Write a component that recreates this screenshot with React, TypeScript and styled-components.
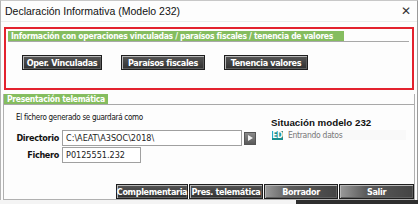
import styled, { createGlobalStyle } from "styled-components";

const GlobalStyle = createGlobalStyle`
  html, body {
    margin: 0;
    padding: 0;
    background: #ffffff;
  }
  body {
    width: 418px;
    height: 204px;
    overflow: hidden;
    font-family: "Liberation Sans", Arial, sans-serif;
  }
`;

const narrow = `"DejaVu Sans Condensed", "Liberation Sans", sans-serif`;

const Window = styled.div`
  width: 416px;
  height: 199px;
  border-left: 1px solid #b4b4b4;
  border-top: 1px solid #c8c8c8;
  border-right: 1px solid #9a9a9a;
  background: #fdfdfd;
  display: flex;
  flex-direction: column;
`;

const TitleBar = styled.div`
  height: 20px;
  display: flex;
  align-items: center;
  justify-content: space-between;
  padding: 0 6px 0 4px;
  border-bottom: 1px solid #ececec;
  font-size: 10.5px;
  color: #111;
`;

const Close = styled.span`
  font-size: 12px;
  color: #333;
`;

const Body = styled.div`
  flex: 1;
  display: flex;
  flex-direction: column;
  padding: 5px 2px 0 2px;
`;

const Highlight = styled.div`
  margin: 0 1px 0 1px;
  height: 57px;
  border: 2px solid #e3222e;
  padding: 2px 3px 0 2px;
`;

const GroupHead = styled.div`
  display: flex;
  border-bottom: 1px solid #a8a8a8;
`;

const Tab = styled.div<{ $w: number }>`
  width: ${(p) => p.$w}px;
  height: 10px;
  line-height: 10px;
  background: #85bd5f;
  color: #fff;
  font-family: ${narrow};
  font-weight: bold;
  font-size: 8.5px;
  letter-spacing: -0.3px;
  padding-left: 3px;
  white-space: nowrap;
  overflow: hidden;
`;

const ButtonRow = styled.div`
  display: flex;
  gap: 19px;
  padding: 13px 0 0 14px;
`;

const DarkButton = styled.div<{ $w: number; $soft?: boolean }>`
  width: ${(p) => p.$w}px;
  height: 15px;
  box-sizing: border-box;
  display: flex;
  align-items: center;
  justify-content: center;
  border: 1px solid #1e1e1e;
  background: ${(p) =>
    p.$soft
      ? "linear-gradient(90deg, #9a9a9a 0%, #5c5c5c 35%, #444 100%)"
      : "linear-gradient(#565656, #303030)"};
  box-shadow: inset 1px 1px 0 #b8b8b8, inset -1px -1px 0 #5e5e5e;
  color: #fff;
  font-family: ${narrow};
  font-weight: bold;
  font-size: 9px;
  letter-spacing: -0.35px;
  white-space: nowrap;
`;

const Group = styled.div`
  margin-top: 4px;
  flex: 1;
  display: flex;
  flex-direction: column;
  border-left: 1px solid #b0b0b0;
  border-right: 1px solid #b0b0b0;
  border-bottom: 1px solid #b0b0b0;
`;

const GroupInner = styled.div`
  flex: 1;
  display: grid;
  grid-template-columns: 265px 1fr;
  grid-template-rows: 1fr auto;
`;

const Left = styled.div`
  display: flex;
  flex-direction: column;
  padding: 7px 0 0 12px;
`;

const Note = styled.div`
  font-family: ${narrow};
  font-size: 8px;
  letter-spacing: -0.3px;
  color: #111;
  height: 12px;
  line-height: 12px;
`;

const Fields = styled.div`
  margin-top: 6px;
  display: grid;
  grid-template-columns: 43px auto;
  column-gap: 3px;
  row-gap: 1px;
  align-items: center;
`;

const Label = styled.div`
  text-align: right;
  font-family: ${narrow};
  font-weight: bold;
  font-size: 9px;
  letter-spacing: -0.3px;
  color: #111;
`;

const FieldLine = styled.div`
  display: flex;
  align-items: center;
  gap: 2px;
`;

const Input = styled.div<{ $w: number }>`
  width: ${(p) => p.$w}px;
  height: 16px;
  box-sizing: border-box;
  border: 1px solid #a0a0a0;
  background: #fff;
  padding-left: 3px;
  line-height: 14px;
  font-family: ${narrow};
  font-size: 9px;
  color: #222;
`;

const Browse = styled.div`
  width: 12px;
  height: 13px;
  box-sizing: border-box;
  border: 1px solid #555;
  background: linear-gradient(#8a8a8a, #5a5a5a);
  display: flex;
  align-items: center;
  justify-content: center;
`;

const Right = styled.div`
  padding: 12px 0 0 2px;
  display: flex;
  flex-direction: column;
  gap: 2px;
`;

const StatusTitle = styled.div`
  font-family: "Liberation Sans", Arial, sans-serif;
  font-weight: bold;
  font-size: 9.75px;
  color: #111;
`;

const StatusLine = styled.div`
  display: flex;
  align-items: center;
  gap: 5px;
  padding-left: 1px;
`;

const Badge = styled.div`
  width: 11px;
  height: 9px;
  background: #1b8f8f;
  color: #fff;
  font-family: ${narrow};
  font-weight: bold;
  font-size: 8px;
  letter-spacing: -0.3px;
  line-height: 9px;
  text-align: center;
`;

const StatusText = styled.div`
  flex: 1;
  margin-right: 8px;
  font-family: ${narrow};
  font-size: 8.5px;
  letter-spacing: -0.3px;
  color: #777;
  background: #f9f9f9;
`;

const Footer = styled.div`
  grid-column: 1 / 3;
  display: flex;
  justify-content: flex-end;
  gap: 1px;
`;

const Under = styled.div`
  height: 4px;
  display: flex;
`;

const UnderPart = styled.div<{ $c: string; $w?: number }>`
  background: ${(p) => p.$c};
  width: ${(p) => (p.$w ? `${p.$w}px` : "auto")};
  flex: ${(p) => (p.$w ? "none" : 1)};
`;

export default function App() {
  return (
    <>
      <GlobalStyle />
      <Window>
        <TitleBar>
          <span>Declaración Informativa (Modelo 232)</span>
          <Close>✕</Close>
        </TitleBar>
        <Body>
          <Highlight>
            <GroupHead>
              <Tab $w={333}>
                Información con operaciones vinculadas / paraísos fiscales / tenencia de valores
              </Tab>
            </GroupHead>
            <ButtonRow>
              <DarkButton $w={80}>Oper. Vinculadas</DarkButton>
              <DarkButton $w={84}>Paraísos fiscales</DarkButton>
              <DarkButton $w={84}>Tenencia valores</DarkButton>
            </ButtonRow>
          </Highlight>
          <Group>
            <GroupHead>
              <Tab $w={101}>Presentación telemática</Tab>
            </GroupHead>
            <GroupInner>
              <Left>
                <Note>El fichero generado se guardará como</Note>
                <Fields>
                  <Label>Directorio</Label>
                  <FieldLine>
                    <Input $w={180}>C:\AEAT\A3SOC\2018\</Input>
                    <Browse>
                      <svg width="5" height="6" viewBox="0 0 5 6">
                        <path d="M0 0 L5 3 L0 6 Z" fill="#f2f2f2" />
                      </svg>
                    </Browse>
                  </FieldLine>
                  <Label>Fichero</Label>
                  <FieldLine>
                    <Input $w={79}>P0125551.232</Input>
                  </FieldLine>
                </Fields>
              </Left>
              <Right>
                <StatusTitle>Situación modelo 232</StatusTitle>
                <StatusLine>
                  <Badge>ED</Badge>
                  <StatusText>Entrando datos</StatusText>
                </StatusLine>
              </Right>
              <Footer>
                <DarkButton $w={72}>Complementaria</DarkButton>
                <DarkButton $w={74}>Pres. telemática</DarkButton>
                <DarkButton $w={74} $soft>
                  Borrador
                </DarkButton>
                <DarkButton $w={75} $soft>
                  Salir
                </DarkButton>
              </Footer>
            </GroupInner>
          </Group>
        </Body>
      </Window>
      <Under>
        <UnderPart $c="#f4f4f4" $w={296} />
        <UnderPart $c="#2e2e2e" />
      </Under>
    </>
  );
}
